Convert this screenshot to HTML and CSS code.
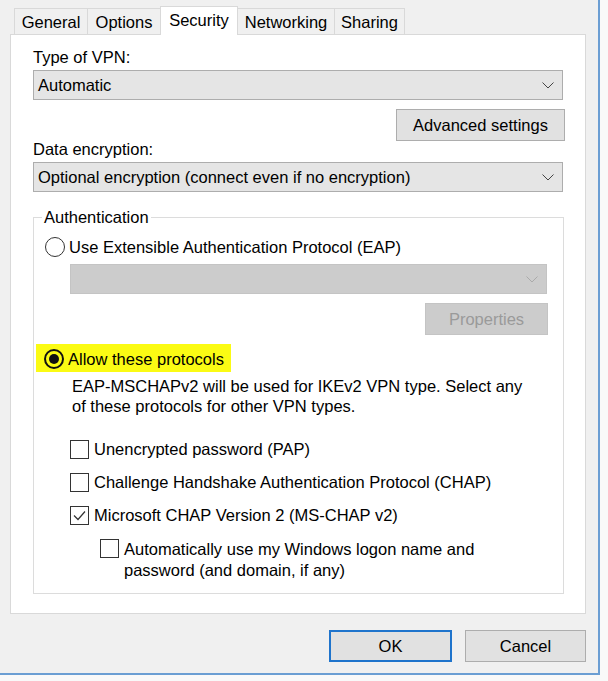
FILE: index.html
```html
<!DOCTYPE html>
<html lang="en">
<head>
<meta charset="utf-8">
<title>VPN Properties - Security</title>
<link rel="stylesheet" href="styles.css">
</head>
<body>
<div class="window">
  <div class="tabs">
    <div class="tab tab-general">General</div>
    <div class="tab tab-options">Options</div>
    <div class="tab tab-security selected">Security</div>
    <div class="tab tab-networking">Networking</div>
    <div class="tab tab-sharing">Sharing</div>
  </div>
  <div class="panel">
    <div class="label label-type">Type of VPN:</div>
    <div class="combo">
      <span class="combo-text">Automatic</span>
      <svg class="chev" width="12" height="7" viewBox="0 0 12 7"><polyline points="0.5,0.5 6,6 11.5,0.5" fill="none" stroke="#444" stroke-width="1"/></svg>
    </div>
    <div class="btn-row">
      <div class="btn btn-adv">Advanced settings</div>
    </div>
    <div class="label label-enc">Data encryption:</div>
    <div class="combo">
      <span class="combo-text">Optional encryption (connect even if no encryption)</span>
      <svg class="chev" width="12" height="7" viewBox="0 0 12 7"><polyline points="0.5,0.5 6,6 11.5,0.5" fill="none" stroke="#444" stroke-width="1"/></svg>
    </div>
    <fieldset class="group">
      <legend>Authentication</legend>
      <div class="radio-row row-eap">
        <span class="radio"></span>
        <span class="opt-text">Use Extensible Authentication Protocol (EAP)</span>
      </div>
      <div class="combo combo-disabled">
        <span class="combo-text"></span>
        <svg class="chev" width="12" height="7" viewBox="0 0 12 7"><polyline points="0.5,0.5 6,6 11.5,0.5" fill="none" stroke="#aaa" stroke-width="1"/></svg>
      </div>
      <div class="btn-row">
        <div class="btn btn-disabled btn-props">Properties</div>
      </div>
      <div class="radio-row row-allow">
        <span class="highlight">
          <span class="radio checked"><span class="dot"></span></span>
          <span class="opt-text">Allow these protocols</span>
        </span>
      </div>
      <p class="note">EAP-MSCHAPv2 will be used for IKEv2 VPN type. Select any of these protocols for other VPN types.</p>
      <div class="checks">
        <div class="check-row">
          <span class="box"></span>
          <span class="opt-text">Unencrypted password (PAP)</span>
        </div>
        <div class="check-row">
          <span class="box"></span>
          <span class="opt-text">Challenge Handshake Authentication Protocol (CHAP)</span>
        </div>
        <div class="check-row">
          <span class="box"><svg width="15" height="15" viewBox="0 0 15 15"><polyline points="2,7.5 6,11.5 13,3.5" fill="none" stroke="#333" stroke-width="1.2"/></svg></span>
          <span class="opt-text">Microsoft CHAP Version 2 (MS-CHAP v2)</span>
        </div>
        <div class="check-row nested">
          <span class="box"></span>
          <span class="opt-text wrap">Automatically use my Windows logon name and password (and domain, if any)</span>
        </div>
      </div>
    </fieldset>
  </div>
  <div class="footer">
    <div class="btn btn-ok">OK</div>
    <div class="btn btn-cancel">Cancel</div>
  </div>
</div>
</body>
</html>
```

FILE: styles.css
```css
* {
  box-sizing: border-box;
}

html,
body {
  margin: 0;
  padding: 0;
}

body {
  width: 608px;
  height: 681px;
  overflow: hidden;
  background: #f9f9f9;
  font-family: "Liberation Sans", Arial, sans-serif;
  font-size: 16.5px;
  color: #000;
}

.window {
  width: 600px;
  height: 675px;
  background: #f0f0f0;
  border-right: 2px solid #6b9ed3;
  border-bottom: 2px solid #6b9ed3;
  padding: 6px 0 0 10px;
}

/* Tabs */
.tabs {
  display: flex;
  align-items: flex-end;
  height: 28px;
  margin-left: 4px;
}

.tab {
  height: 26px;
  border: 1px solid #d9d9d9;
  border-bottom: none;
  margin-left: -1px;
  padding-top: 4px;
  line-height: 19px;
  text-align: center;
  background: #f0f0f0;
  white-space: nowrap;
}

.tab-general { margin-left: 0; width: 74px; }
.tab-options { width: 74px; }
.tab-security { width: 78px; }
.tab-networking { width: 98px; }
.tab-sharing { width: 71px; }

.tab.selected {
  position: relative;
  z-index: 1;
  height: 29px;
  margin-bottom: -1px;
  padding-top: 4px;
  background: #fff;
}

/* Panel */
.panel {
  width: 576px;
  height: 580px;
  background: #fff;
  border: 1px solid #d9d9d9;
  padding: 13px 22px 0 22px;
  display: flex;
  flex-direction: column;
}

.label {
  line-height: 19px;
}

.label-enc {
  margin-top: -1px;
}

.combo {
  display: flex;
  align-items: center;
  justify-content: space-between;
  height: 30px;
  margin-top: 3px;
  padding: 0 8px 0 4px;
  background: #e5e5e5;
  border: 1px solid #adadad;
  line-height: 19px;
  white-space: nowrap;
}

.chev {
  display: block;
}

.btn-row {
  display: flex;
  justify-content: flex-end;
}

.btn {
  display: flex;
  align-items: center;
  justify-content: center;
  height: 32px;
  background: #e1e1e1;
  border: 1px solid #adadad;
  line-height: 19px;
  white-space: nowrap;
}

.btn-adv {
  width: 169px;
  margin-top: 9px;
  margin-right: -2px;
}

/* Group box */
.group {
  margin: 16px -1px 0 0;
  padding: 0 16px 12px 11px;
  border: 1px solid #dcdcdc;
  min-width: 0;
}

.group legend {
  margin-left: -3px;
  padding: 0 2px;
  line-height: 19px;
}

.radio-row {
  display: flex;
  align-items: center;
}

.row-eap {
  height: 20px;
  margin-top: 10px;
}

.radio {
  flex: none;
  display: flex;
  align-items: center;
  justify-content: center;
  width: 20px;
  height: 20px;
  border: 1px solid #333;
  border-radius: 50%;
  background: #fff;
  margin-right: 4px;
}

.radio.checked {
  border: 2px solid #111;
  background: transparent;
}

.radio .dot {
  width: 10px;
  height: 10px;
  border-radius: 50%;
  background: #111;
}

.opt-text {
  line-height: 19px;
  white-space: nowrap;
}

.combo-disabled {
  margin: 7px 0 0 25px;
  background: #cccccc;
  border-color: #c4c4c4;
}

.btn-disabled {
  background: #cccccc;
  border-color: #c4c4c4;
  color: #9a9a9a;
}

.btn-props {
  width: 123px;
  margin-top: 9px;
  margin-right: -1px;
}

.row-allow {
  margin-top: 9px;
}

.highlight {
  display: flex;
  align-items: center;
  height: 28px;
  margin-left: -9px;
  padding: 2px 7px 0 8px;
  background: #fbfb14;
}

.note {
  margin: 4px 0 0 27px;
  width: 460px;
  line-height: 20px;
}

.checks {
  display: flex;
  flex-direction: column;
  gap: 14px;
  margin-top: 24px;
  padding-left: 25px;
}

.check-row {
  display: flex;
  align-items: center;
}

.box {
  flex: none;
  display: flex;
  align-items: center;
  justify-content: center;
  width: 19px;
  height: 19px;
  border: 1px solid #333;
  background: #fff;
  margin-right: 5px;
}

.nested {
  align-items: flex-start;
  padding-left: 30px;
}

.nested .box {
  margin-top: 0;
}

.wrap {
  white-space: normal;
  width: 400px;
  line-height: 21px;
}

/* Footer */
.footer {
  display: flex;
  justify-content: flex-end;
  gap: 13px;
  width: 576px;
  margin-top: 16px;
}

.btn-ok {
  width: 123px;
  border: 2px solid #1f74cc;
}

.btn-cancel {
  width: 121px;
}
```
